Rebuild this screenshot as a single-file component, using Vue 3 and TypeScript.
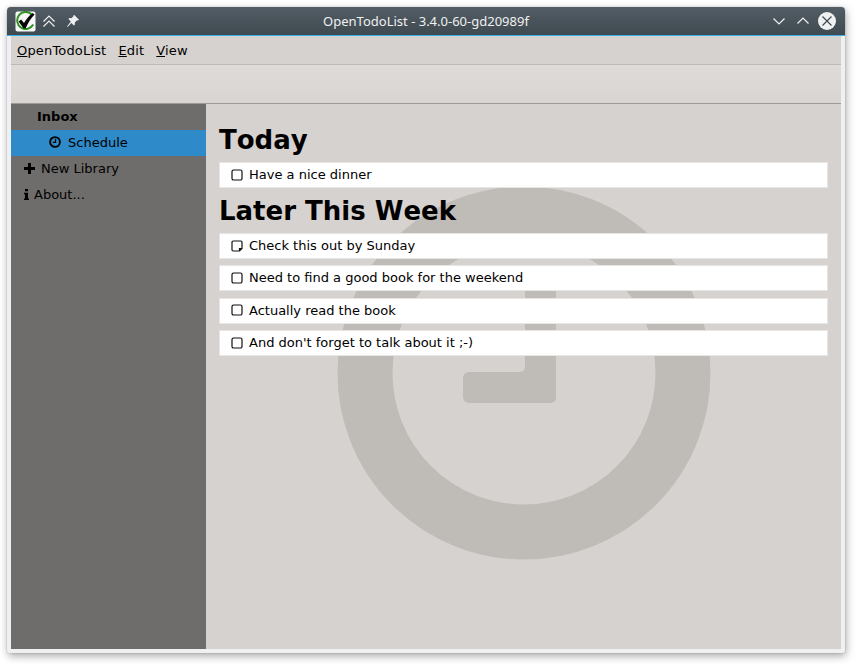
<script setup lang="ts">
const menus = [
  { key: 'O', rest: 'penTodoList' },
  { key: 'E', rest: 'dit' },
  { key: 'V', rest: 'iew' },
]

const groups = [
  {
    title: 'Today',
    items: [{ text: 'Have a nice dinner', note: false }],
  },
  {
    title: 'Later This Week',
    items: [
      { text: 'Check this out by Sunday', note: true },
      { text: 'Need to find a good book for the weekend', note: false },
      { text: 'Actually read the book', note: false },
      { text: "And don't forget to talk about it ;-)", note: false },
    ],
  },
]
</script>

<template>
  <div class="screen">
    <div class="window">
      <header class="titlebar">
        <div class="tb-left">
          <svg class="app-icon" width="21" height="21" viewBox="0 0 21 21">
            <rect x="0.5" y="0.5" width="20" height="20" rx="2" fill="#f7f8f6" />
            <path d="M16.5 3.200A8.500 8.500 0 1 0 18.200 13.500" fill="none" stroke="#2f9222" stroke-width="2" />
            <path d="M3.600 10.400l2.600-2 2.800 3.600c2.200-3.800 4.800-7 8.600-10l2 1.400c-3.800 3.800-6.600 8.200-9 14h-2z" fill="#050505" />
          </svg>
          <svg class="tb-btn" width="14" height="14" viewBox="0 0 14 14" fill="none" stroke="#eff0f1" stroke-width="1.200">
            <path d="M1.500 7.500L7 2l5.500 5.500M1.500 12.500L7 7l5.500 5.500" />
          </svg>
          <svg class="tb-btn pin" width="14" height="14" viewBox="0 0 14 14">
            <path d="M8.300 1l4.700 4.700-1 .9-.9-.3-2.300 2.300.1 2-1 1-2.500-2.500L1.500 13 1 12.500l3.900-4.900L2.400 5.100l1-1 2 .1 2.300-2.300-.3-.9z" fill="#eff0f1" />
          </svg>
        </div>
        <div class="tb-title">OpenTodoList - 3.4.0-60-gd20989f</div>
        <div class="tb-right">
          <svg width="14" height="14" viewBox="0 0 14 14" fill="none" stroke="#eff0f1" stroke-width="1.200">
            <path d="M1.500 4.500L7 10l5.500-5.500" />
          </svg>
          <svg width="14" height="14" viewBox="0 0 14 14" fill="none" stroke="#eff0f1" stroke-width="1.200">
            <path d="M1.500 9.500L7 4l5.500 5.500" />
          </svg>
          <svg class="tb-close" width="18" height="18" viewBox="0 0 18 18">
            <circle cx="9" cy="9" r="9" fill="#eff0f1" />
            <path d="M4.500 4.500l9 9M13.500 4.500l-9 9" stroke="#3f4950" stroke-width="1.200" fill="none" />
          </svg>
        </div>
      </header>

      <div class="frame">
        <nav class="menubar">
          <span v-for="m in menus" :key="m.key" class="menu"><u>{{ m.key }}</u>{{ m.rest }}</span>
        </nav>
        <div class="toolbar"></div>

        <div class="body">
          <aside class="sidebar">
            <div class="side-row inbox">Inbox</div>
            <div class="side-row schedule">
              <svg width="12" height="12" viewBox="0 0 12 12" fill="none" stroke="#000" stroke-width="1.900">
                <circle cx="6" cy="6" r="4.900" />
                <path d="M6.500 2.800v3.500H3.800" stroke-width="1.300" />
              </svg>
              <span>Schedule</span>
            </div>
            <div class="side-row library">
              <svg width="11" height="11" viewBox="0 0 11 11">
                <path d="M4 0h3v4h4v3H7v4H4V7H0V4h4z" fill="#000" />
              </svg>
              <span>New Library</span>
            </div>
            <div class="side-row about">
              <svg width="5" height="11" viewBox="0 0 5 11">
                <path d="M1 0h3v2.200H1zM0 3.800h4v5.700h1V11H0V9.500h1V5.300H0z" fill="#000" />
              </svg>
              <span>About...</span>
            </div>
          </aside>

          <main class="content">
            <svg class="watermark" width="376" height="376" viewBox="0 0 376 376">
              <circle cx="188" cy="188" r="159" fill="none" stroke="#bfbbb7" stroke-width="55" />
              <path
                d="M189 101a5 5 0 0 1 5-5h21a5 5 0 0 1 5 5v112a5 5 0 0 1-5 5h-82a6 6 0 0 1-6-6v-19a6 6 0 0 1 6-6h51a5 5 0 0 0 5-5z"
                fill="#bfbbb7"
              />
            </svg>

            <section v-for="g in groups" :key="g.title" class="group">
              <h2>{{ g.title }}</h2>
              <div v-for="item in g.items" :key="item.text" class="todo">
                <svg width="12" height="12" viewBox="0 0 12 12" fill="none" stroke="#111" stroke-width="1.200">
                  <path
                    v-if="item.note"
                    d="M2.200 1h7.600A1.200 1.200 0 0 1 11 2.200V8.500L8.500 11H2.200A1.200 1.200 0 0 1 1 9.800V2.200A1.200 1.200 0 0 1 2.200 1zM11 8.500H8.500V11"
                  />
                  <rect v-else x="1" y="1" width="10" height="10" rx="1.600" />
                </svg>
                <span>{{ item.text }}</span>
              </div>
            </section>
          </main>
        </div>
      </div>
    </div>
  </div>
</template>

<style>
html, body {
  margin: 0;
  background: #fff;
}
</style>

<style scoped>
.screen {
  width: 858px;
  height: 666px;
  box-sizing: border-box;
  padding: 7px 0 0 7px;
  overflow: hidden;
}

.window {
  width: 838px;
  height: 646px;
  display: flex;
  flex-direction: column;
  border-radius: 4px 4px 3px 3px;
  box-shadow: 0 0 1px rgba(0, 0, 0, 0.55), 1px 3px 8px rgba(0, 0, 0, 0.35);
  font-family: "DejaVu Sans", sans-serif;
  font-size: 13px;
  color: #000;
}

.titlebar {
  height: 28px;
  flex: none;
  display: flex;
  align-items: center;
  justify-content: space-between;
  position: relative;
  padding: 0 9px 0 8px;
  background: linear-gradient(#535d65, #3f4950);
  border-bottom: 1px solid #3daee9;
  border-radius: 4px 4px 0 0;
}

.tb-left {
  display: flex;
  align-items: center;
}

.tb-btn {
  margin-left: 6px;
}

.tb-btn.pin {
  margin-left: 10px;
}

.tb-title {
  position: absolute;
  left: 0;
  right: 0;
  text-align: center;
  color: #eff0f1;
  font-family: "Noto Sans", sans-serif;
  font-size: 13px;
}

.tb-right {
  display: flex;
  align-items: center;
  gap: 10px;
}

.tb-close {
  margin-left: -2px;
}

.frame {
  flex: 1;
  min-height: 0;
  display: flex;
  flex-direction: column;
  padding: 0 4px 4px;
  background: #eff0f1;
  border-radius: 0 0 3px 3px;
}

.menubar {
  height: 29px;
  flex: none;
  display: flex;
  align-items: center;
  gap: 12px;
  padding-left: 6px;
  background: #d6d2cf;
  border-bottom: 1px solid #bdb9b5;
  box-sizing: border-box;
  letter-spacing: 0.17px;
}

.toolbar {
  height: 39px;
  flex: none;
  box-sizing: border-box;
  background: linear-gradient(#dfdbd8, #d9d5d2);
  border-bottom: 1px solid #9d9a97;
}

.body {
  flex: 1;
  min-height: 0;
  display: flex;
}

.sidebar {
  width: 195px;
  flex: none;
  background: #6f6d6b;
}

.side-row {
  height: 26px;
  display: flex;
  align-items: center;
  box-sizing: border-box;
  padding-bottom: 2px;
}

.inbox {
  padding-left: 26px;
  font-weight: bold;
}

.schedule {
  padding-left: 38px;
  gap: 7px;
  background: #2e8ac8;
}

.library {
  padding-left: 13px;
  gap: 6px;
}

.about {
  padding-left: 13px;
  gap: 5px;
}

.content {
  flex: 1;
  position: relative;
  min-width: 0;
  padding: 13px 13px 0 13px;
  background: #d6d2cf;
  overflow: hidden;
}

.watermark {
  position: absolute;
  left: 129.500px;
  top: 81px;
}

.group {
  position: relative;
}

.group h2 {
  margin: 0;
  height: 45px;
  padding-top: 2px;
  box-sizing: border-box;
  line-height: 43px;
  font-size: 26px;
  font-weight: bold;
  font-kerning: none;
}

.todo {
  height: 26px;
  margin-bottom: 6.400px;
  box-sizing: border-box;
  display: flex;
  align-items: center;
  gap: 6px;
  padding: 0 0 0.800px 11px;
  background: #fff;
  border: 1px solid #e8e6e4;
}

.group:first-of-type .todo {
  margin-bottom: 0;
}
</style>
